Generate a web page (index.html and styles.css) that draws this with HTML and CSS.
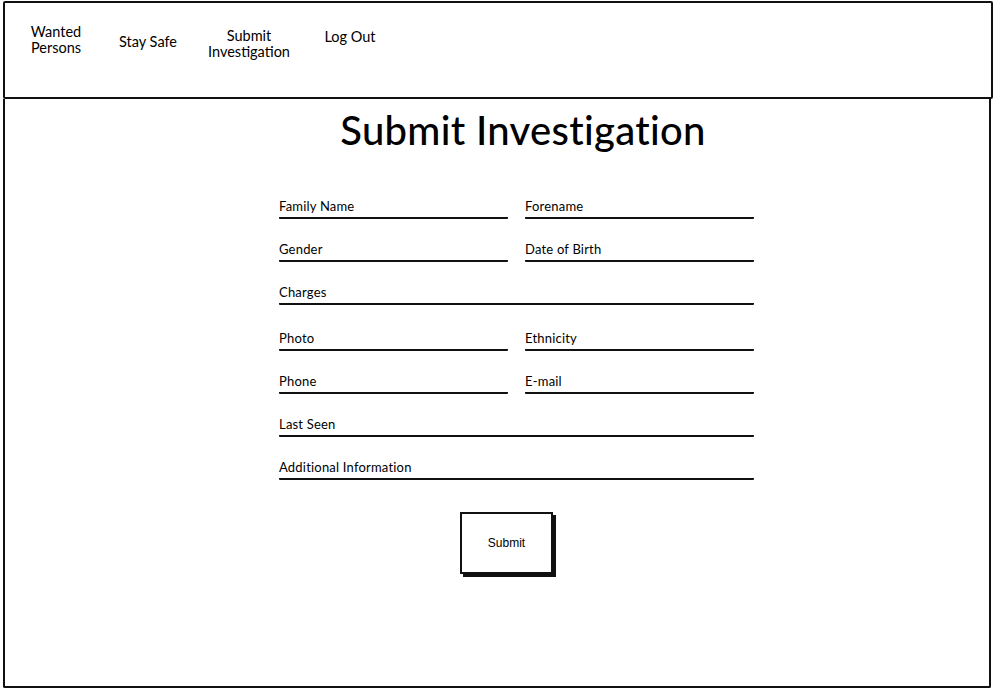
FILE: index.html
```html
<!DOCTYPE html>
<html lang="en">
<head>
<meta charset="utf-8">
<title>Submit Investigation</title>
<link rel="stylesheet" href="styles.css">
</head>
<body>
<div class="page">
  <header class="topbar">
    <nav class="nav">
      <a class="nav-item nav-wanted">Wanted<br>Persons</a>
      <a class="nav-item nav-safe">Stay Safe</a>
      <a class="nav-item nav-submit">Submit<br>Investigation</a>
      <a class="nav-item nav-logout">Log Out</a>
    </nav>
  </header>
  <main class="main">
    <div class="content">
      <h1 class="title">Submit Investigation</h1>
      <form class="form">
        <div class="field"><span class="label">Family Name</span></div>
        <div class="field"><span class="label">Forename</span></div>
        <div class="field"><span class="label">Gender</span></div>
        <div class="field"><span class="label">Date of Birth</span></div>
        <div class="field wide"><span class="label">Charges</span></div>
        <div class="field spaced"><span class="label">Photo</span></div>
        <div class="field spaced"><span class="label">Ethnicity</span></div>
        <div class="field"><span class="label">Phone</span></div>
        <div class="field"><span class="label">E-mail</span></div>
        <div class="field wide"><span class="label">Last Seen</span></div>
        <div class="field wide"><span class="label">Additional Information</span></div>
      </form>
      <div class="actions">
        <button class="btn" type="button">Submit</button>
      </div>
    </div>
  </main>
</div>
</body>
</html>
```

FILE: styles.css
```css
* { box-sizing: border-box; }

html, body {
  margin: 0;
  padding: 0;
  background: #fff;
}

body {
  font-family: Lato, "Noto Sans", "Liberation Sans", sans-serif;
  color: #000;
}

.page {
  width: 997px;
  height: 693px;
  padding: 1px 4px 0 3px;
}

.topbar {
  height: 98px;
  border: 2px solid #111;
  border-radius: 2px;
  padding: 0 0 0 15px;
}

.nav {
  display: flex;
  align-items: flex-start;
}

.nav-item {
  font-size: 14.5px;
  line-height: 16px;
  text-align: center;
  color: #000;
  text-decoration: none;
}

.nav-wanted { padding-top: 21px; width: 66px; margin-left: 3px; }
.nav-safe { padding-top: 31px; width: 66px; margin-left: 26px; }
.nav-submit { padding-top: 25px; width: 92px; margin-left: 22px; }
.nav-logout { padding-top: 26px; width: 60px; margin-left: 25px; }

.main {
  height: 589px;
  width: 988px;
  border: 2px solid #111;
  border-top: none;
  border-radius: 0 0 2px 2px;
}

.content {
  width: 475px;
  margin-left: 274px;
  display: flex;
  flex-direction: column;
}

.title {
  margin: 7px 0 0 0;
  padding-left: 13px;
  font-size: 40px;
  line-height: 48px;
  font-weight: 500;
  text-align: center;
  letter-spacing: 0.3px;
}

.form {
  margin-top: 44px;
  display: grid;
  grid-template-columns: 229px 229px;
  column-gap: 17px;
  row-gap: 22px;
}

.field {
  display: flex;
  padding-bottom: 3px;
  border-bottom: 2px solid #111;
  border-radius: 1px;
}

.field.wide { grid-column: 1 / -1; }
.field.spaced { margin-top: 3px; }

.label {
  font-size: 13px;
  line-height: 16px;
  letter-spacing: 0.2px;
}

.actions {
  margin-top: 32px;
  padding-left: 181px;
  display: flex;
}

.btn {
  width: 93px;
  height: 62px;
  border: 2px solid #111;
  background: #fff;
  box-shadow: 3px 3px 0 #111;
  font-family: "Liberation Sans", Arial, sans-serif;
  font-size: 12px;
  color: #000;
  padding: 0;
}
```
